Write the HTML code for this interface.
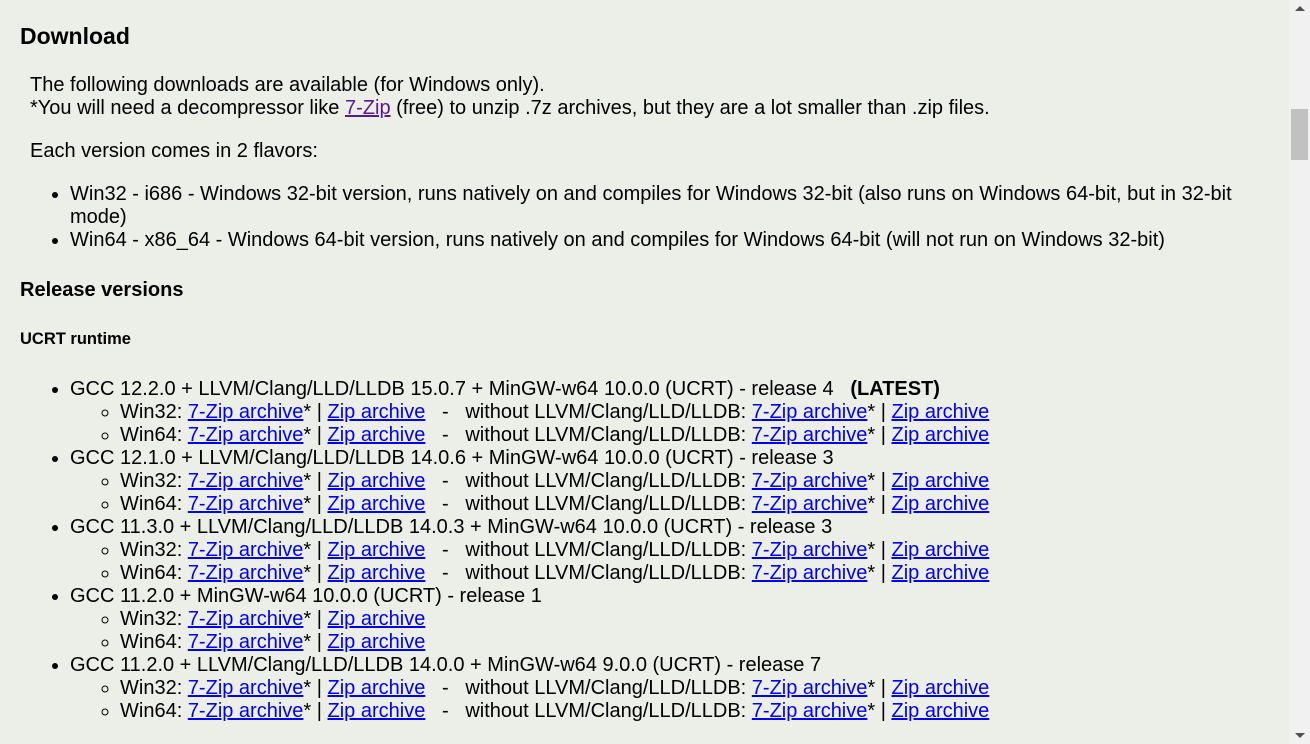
<!DOCTYPE html>
<html><head><meta charset="utf-8"><style>
html,body{margin:0;padding:0;width:1310px;height:744px;overflow:hidden;background:#eceee8;font-family:"Liberation Sans",Arial,sans-serif;color:#000}
.b{position:absolute;left:0;margin:0;font-size:20px;line-height:23px}
h2,h3,h4{position:absolute;margin:0;left:20px;font-weight:bold}
a{color:#0000ee;text-decoration:underline}
a.v{color:#551a8b}
ul{margin:0;padding:0 0 0 70px;list-style:disc}
ul ul{padding-left:50px;list-style:circle}
.sb{position:absolute;left:1289px;top:0;width:21px;height:744px;background:#f1f1f1}
.th{position:absolute;left:1291px;top:109px;width:17px;height:51px;background:#c1c1c1}
.ar{position:absolute;left:1295px;width:0;height:0;border-left:5px solid transparent;border-right:5px solid transparent}
</style></head><body>
<h2 style="top:23px;font-size:23px;line-height:26px">Download</h2>
<p class="b" style="left:30px;top:74px">The following downloads are available (for Windows only).<br>*You will need a decompressor like <a class="v">7-Zip</a> (free) to unzip .7z archives, but they are a lot smaller than .zip files.</p>
<p class="b" style="left:30px;top:140px">Each version comes in 2 flavors:</p>
<div class="b" style="top:183px;width:1255px"><ul>
<li>Win32 - i686 - Windows 32-bit version, runs natively on and compiles for Windows 32-bit (also runs on Windows 64-bit, but in 32-bit mode)</li>
<li>Win64 - x86_64 - Windows 64-bit version, runs natively on and compiles for Windows 64-bit (will not run on Windows 32-bit)</li></ul></div>
<h3 style="top:278px;font-size:20px;line-height:24px">Release versions</h3>
<h4 style="top:330px;font-size:16.5px;line-height:18px">UCRT runtime</h4>
<div class="b" style="top:378px;width:1260px"><ul>
<li>GCC 12.2.0 + LLVM/Clang/LLD/LLDB 15.0.7 + MinGW-w64 10.0.0 (UCRT) - release 4 &nbsp;&nbsp;<b>(LATEST)</b><ul>
<li>Win32: <a>7-Zip archive</a>* | <a>Zip archive</a> &nbsp;&nbsp;-&nbsp;&nbsp; without LLVM/Clang/LLD/LLDB: <a>7-Zip archive</a>* | <a>Zip archive</a></li>
<li>Win64: <a>7-Zip archive</a>* | <a>Zip archive</a> &nbsp;&nbsp;-&nbsp;&nbsp; without LLVM/Clang/LLD/LLDB: <a>7-Zip archive</a>* | <a>Zip archive</a></li></ul></li>
<li>GCC 12.1.0 + LLVM/Clang/LLD/LLDB 14.0.6 + MinGW-w64 10.0.0 (UCRT) - release 3<ul>
<li>Win32: <a>7-Zip archive</a>* | <a>Zip archive</a> &nbsp;&nbsp;-&nbsp;&nbsp; without LLVM/Clang/LLD/LLDB: <a>7-Zip archive</a>* | <a>Zip archive</a></li>
<li>Win64: <a>7-Zip archive</a>* | <a>Zip archive</a> &nbsp;&nbsp;-&nbsp;&nbsp; without LLVM/Clang/LLD/LLDB: <a>7-Zip archive</a>* | <a>Zip archive</a></li></ul></li>
<li>GCC 11.3.0 + LLVM/Clang/LLD/LLDB 14.0.3 + MinGW-w64 10.0.0 (UCRT) - release 3<ul>
<li>Win32: <a>7-Zip archive</a>* | <a>Zip archive</a> &nbsp;&nbsp;-&nbsp;&nbsp; without LLVM/Clang/LLD/LLDB: <a>7-Zip archive</a>* | <a>Zip archive</a></li>
<li>Win64: <a>7-Zip archive</a>* | <a>Zip archive</a> &nbsp;&nbsp;-&nbsp;&nbsp; without LLVM/Clang/LLD/LLDB: <a>7-Zip archive</a>* | <a>Zip archive</a></li></ul></li>
<li>GCC 11.2.0 + MinGW-w64 10.0.0 (UCRT) - release 1<ul>
<li>Win32: <a>7-Zip archive</a>* | <a>Zip archive</a></li>
<li>Win64: <a>7-Zip archive</a>* | <a>Zip archive</a></li></ul></li>
<li>GCC 11.2.0 + LLVM/Clang/LLD/LLDB 14.0.0 + MinGW-w64 9.0.0 (UCRT) - release 7<ul>
<li>Win32: <a>7-Zip archive</a>* | <a>Zip archive</a> &nbsp;&nbsp;-&nbsp;&nbsp; without LLVM/Clang/LLD/LLDB: <a>7-Zip archive</a>* | <a>Zip archive</a></li>
<li>Win64: <a>7-Zip archive</a>* | <a>Zip archive</a> &nbsp;&nbsp;-&nbsp;&nbsp; without LLVM/Clang/LLD/LLDB: <a>7-Zip archive</a>* | <a>Zip archive</a></li></ul></li>
</ul></div>
<div class="sb"></div><div class="th"></div>
<div class="ar" style="top:6px;border-bottom:5px solid #505050"></div>
<div class="ar" style="top:733px;border-top:5px solid #505050"></div>
</body></html>
